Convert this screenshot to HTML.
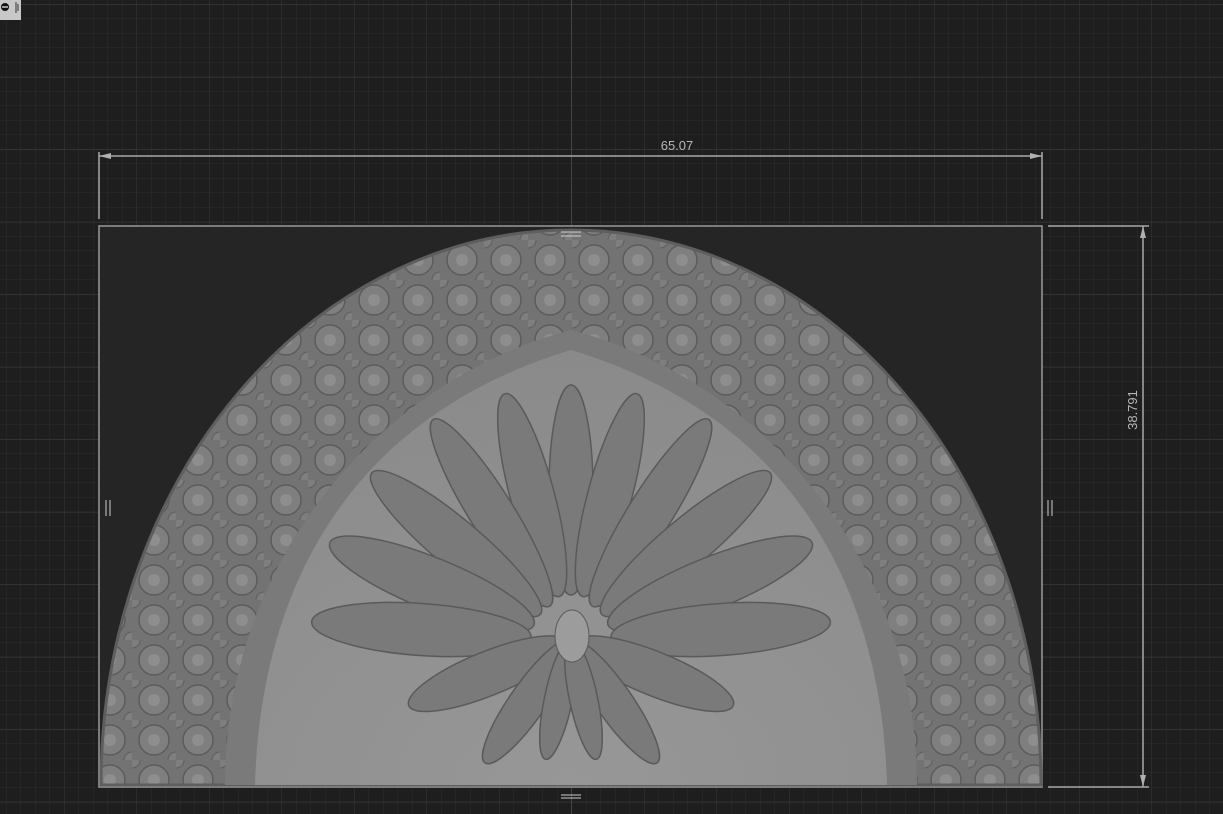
<!DOCTYPE html><html><head><style>
html,body{margin:0;padding:0;background:#1e1e1e;width:1223px;height:814px;overflow:hidden}
</style></head><body>
<svg width="1223" height="814" xmlns="http://www.w3.org/2000/svg" style="position:absolute;left:0;top:0">
<defs>
<pattern id="mi" x="6" y="4" width="14.5" height="14.5" patternUnits="userSpaceOnUse"><path d="M0 0H14.5M0 0V14.5" stroke="#2c2c2c" stroke-width="1"/></pattern>
<pattern id="ma" x="64" y="77" width="72.5" height="72.5" patternUnits="userSpaceOnUse"><path d="M0 0H72.5M0 0V72.5" stroke="#383838" stroke-width="1"/></pattern>
<radialGradient id="g" cx="0.5" cy="1" r="1"><stop offset="0" stop-color="#979797"/><stop offset="1" stop-color="#8a8a8a"/></radialGradient>
<pattern id="fl" width="44" height="40" patternUnits="userSpaceOnUse"><rect width="44" height="40" fill="#737373"/><circle cx="22" cy="20" r="15" fill="#7f7f7f" stroke="#5c5c5c" stroke-width="1.5"/><circle cx="22" cy="20" r="6" fill="#8e8e8e"/><circle cx="0" cy="0" r="8" fill="#7e7e7e" stroke="#5e5e5e"/><circle cx="44" cy="40" r="8" fill="#7e7e7e" stroke="#5e5e5e"/></pattern>
</defs>
<rect width="1223" height="814" fill="#1e1e1e"/>
<rect width="1223" height="814" fill="url(#mi)"/>
<rect width="1223" height="814" fill="url(#ma)"/>
<line x1="571.5" y1="0" x2="571.5" y2="814" stroke="#454545"/>
<rect x="99" y="226" width="943" height="561" fill="#252525" stroke="#9a9a9a" stroke-width="1.5"/>
<path d="M101 785 A470 555 0 0 1 1041 785 Z" fill="url(#fl)"/>
<path d="M101 785 A470 555 0 0 1 1041 785 Z" fill="none" stroke="#5e5e5e" stroke-width="3"/>
<path d="M225 785 C225 560 380 380 571 330 C762 380 917 560 917 785 Z" fill="#7a7a7a"/>
<path d="M255 785 C260 600 340 420 571 350 C802 420 882 600 887 785 Z" fill="url(#g)"/>
<g fill="#7a7a7a" stroke="#5a5a5a" stroke-width="1.5">
<ellipse cx="571" cy="490" rx="22" ry="105"/>
<ellipse cx="571" cy="490" rx="22" ry="105" transform="rotate(-15 571 640)"/>
<ellipse cx="571" cy="490" rx="22" ry="105" transform="rotate(15 571 640)"/>
<ellipse cx="571" cy="490" rx="22" ry="110" transform="rotate(-32 571 640)"/>
<ellipse cx="571" cy="490" rx="22" ry="110" transform="rotate(32 571 640)"/>
<ellipse cx="571" cy="490" rx="24" ry="110" transform="rotate(-50 571 640)"/>
<ellipse cx="571" cy="490" rx="24" ry="110" transform="rotate(50 571 640)"/>
<ellipse cx="571" cy="490" rx="26" ry="110" transform="rotate(-68 571 640)"/>
<ellipse cx="571" cy="490" rx="26" ry="110" transform="rotate(68 571 640)"/>
<ellipse cx="571" cy="490" rx="26" ry="110" transform="rotate(-86 571 640)"/>
<ellipse cx="571" cy="490" rx="26" ry="110" transform="rotate(86 571 640)"/>
<ellipse cx="571" cy="550" rx="22" ry="85" transform="rotate(-112 571 640)"/>
<ellipse cx="571" cy="550" rx="22" ry="85" transform="rotate(112 571 640)"/>
<ellipse cx="571" cy="565" rx="18" ry="75" transform="rotate(-145 571 640)"/>
<ellipse cx="571" cy="565" rx="18" ry="75" transform="rotate(145 571 640)"/>
<ellipse cx="571" cy="580" rx="14" ry="62" transform="rotate(-168 571 640)"/>
<ellipse cx="571" cy="580" rx="14" ry="62" transform="rotate(168 571 640)"/>
</g>
<ellipse cx="572" cy="636" rx="17" ry="26" fill="#9c9c9c" stroke="#5a5a5a"/>
<line x1="99" y1="156" x2="1042" y2="156" stroke="#a8a8a8" stroke-width="1.5"/>
<line x1="99" y1="152" x2="99" y2="219" stroke="#a8a8a8" stroke-width="1.5"/>
<line x1="1042" y1="152" x2="1042" y2="219" stroke="#a8a8a8" stroke-width="1.5"/>
<path d="M99 156 l12 -3 v6 Z M1042 156 l-12 -3 v6 Z" fill="#b0b0b0"/>
<text x="677" y="150" fill="#b8b8b8" font-family="Liberation Sans,sans-serif" font-size="13" text-anchor="middle">65.07</text>
<line x1="1048" y1="226" x2="1149" y2="226" stroke="#a8a8a8" stroke-width="1.5"/>
<line x1="1048" y1="787" x2="1149" y2="787" stroke="#a8a8a8" stroke-width="1.5"/>
<line x1="1143" y1="226" x2="1143" y2="787" stroke="#a8a8a8" stroke-width="1.5"/>
<path d="M1143 226 l-3 12 h6 Z M1143 787 l-3 -12 h6 Z" fill="#b0b0b0"/>
<text x="1137" y="410" fill="#b8b8b8" font-family="Liberation Sans,sans-serif" font-size="13" text-anchor="middle" transform="rotate(-90 1137 410)">38.791</text>
<g fill="none" stroke="#cfcfcf" stroke-width="1"><path d="M561 232h20M561 236h20M561 795h20M561 798h20M106 500v16M110 500v16M1048 500v16M1052 500v16"/></g>
<rect x="0" y="0" width="21" height="20" fill="#c8c8c8"/>
<circle cx="5" cy="7" r="4" fill="#111"/><line x1="2" y1="7" x2="8" y2="7" stroke="#ccc" stroke-width="1.5"/>
<line x1="16" y1="2" x2="16" y2="13" stroke="#333"/><line x1="18" y1="4" x2="18" y2="11" stroke="#333"/>
</svg>
</body></html>
